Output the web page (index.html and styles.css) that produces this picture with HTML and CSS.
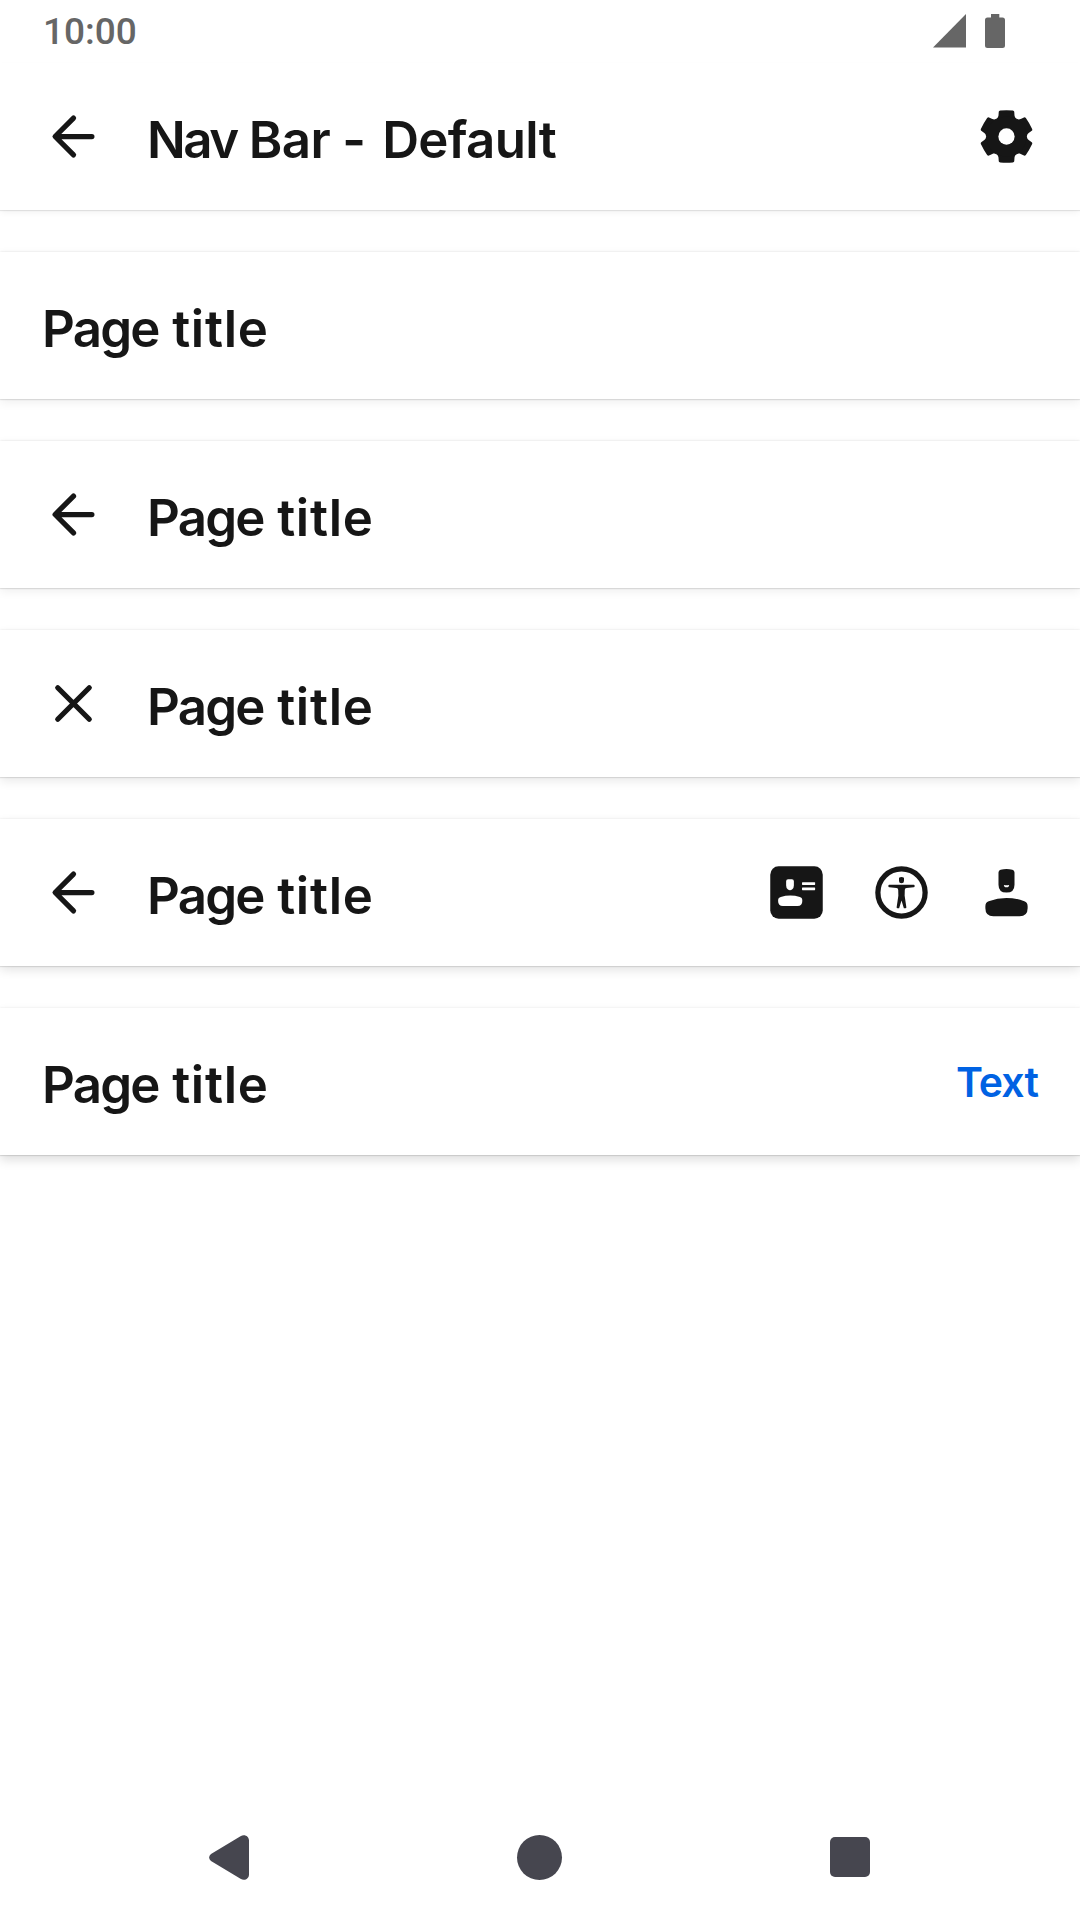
FILE: index.html
```html
<!DOCTYPE html>
<html lang="en">
<head>
<meta charset="utf-8">
<title>Nav Bar - Default</title>
<link rel="stylesheet" href="styles.css">
</head>
<body>
<svg class="defs" width="0" height="0" aria-hidden="true">
  <symbol id="back" viewBox="0 0 24 24"><path class="line" d="M19 12H5.2M12 5L5 12L12 19"/></symbol>
  <symbol id="close" viewBox="0 0 24 24"><path class="line" d="M6 6L18 18M18 6L6 18"/></symbol>
  <g id="tooth"><path d="M0 0L-3.9 -6.75C-3.4 -7.05 -3.15 -7.4 -3.05 -8L-2.95 -9.4Q-2.9 -9.8 -2.4 -9.9Q0 -10.1 2.4 -9.9Q2.9 -9.8 2.95 -9.4L3.05 -8C3.15 -7.4 3.4 -7.05 3.9 -6.75Z"/></g>
</svg>

<header class="status">
  <span class="time">10:00</span>
  <svg class="signal" viewBox="0 0 33 34"><path d="M0 33.5L33 0V33.5Z"/></svg>
  <svg class="battery" viewBox="0 0 20 34"><path d="M6 0H14.3V3.5H17.5Q20 3.5 20 6V31.5Q20 34 17.5 34H2.5Q0 34 0 31.5V6Q0 3.5 2.5 3.5H6Z"/></svg>
</header>

<main class="bars">
  <div class="bar bar-top">
    <svg class="icon"><use href="#back"/></svg>
    <h1 class="title title-main"><span class="narrow">Nav</span> Bar <span class="dash">-</span> Default</h1>
    <svg class="icon" viewBox="0 0 24 24">
      <g transform="translate(12 12)">
        <use href="#tooth"/><use href="#tooth" transform="rotate(60)"/><use href="#tooth" transform="rotate(120)"/>
        <use href="#tooth" transform="rotate(180)"/><use href="#tooth" transform="rotate(240)"/><use href="#tooth" transform="rotate(300)"/>
        <circle r="7.65"/><circle class="cut" r="3.1"/>
      </g>
    </svg>
  </div>

  <div class="bar level-1"><h2 class="title"><span class="tight">Page</span> title</h2></div>

  <div class="bar level-2">
    <svg class="icon"><use href="#back"/></svg>
    <h2 class="title"><span class="tight">Page</span> title</h2>
  </div>

  <div class="bar level-3">
    <svg class="icon"><use href="#close"/></svg>
    <h2 class="title"><span class="tight">Page</span> title</h2>
  </div>

  <div class="bar level-4">
    <svg class="icon"><use href="#back"/></svg>
    <h2 class="title"><span class="tight">Page</span> title</h2>
    <svg class="icon" viewBox="0 0 24 24">
      <rect x="2" y="2" width="20" height="20" rx="3.2"/>
      <path class="cut" d="M8.05 7.7Q8.05 6.95 8.8 6.95H10.25Q11 6.95 11 7.7V9.3Q11 10.2 10.4 10.75Q9.5 11.5 8.65 10.75Q8.05 10.2 8.05 9.3ZM5 14.8Q5 14 6 13.7Q9.6 12.6 13.3 13.7Q14.2 14 14.2 14.8V15.3Q14.2 17.1 12.4 17.1H6.8Q5 17.1 5 15.3Z"/>
      <rect class="cut" x="14.1" y="8.05" width="5" height="1.05" rx=".2"/>
      <rect class="cut" x="14.1" y="10.05" width="5" height="1.05" rx=".2"/>
    </svg>
    <svg class="icon" viewBox="0 0 24 24">
      <circle class="ring" cx="12" cy="12" r="9"/>
      <path d="M11.05 6.4Q12 5.8 12.95 6.4V7.6Q12.95 8.45 12 8.45Q11.05 8.45 11.05 7.6ZM7.35 9.05H16.65Q17 9.05 17 9.4V9.65Q17 9.95 16.65 10L13.9 10.25Q13.25 10.35 13.25 11L13.2 13.2L13.85 17.6Q13.9 18 13.5 18H12.9L12 15L11.1 18H10.5Q10.1 18 10.15 17.6L10.8 13.2L10.75 11Q10.75 10.35 10.1 10.25L7.35 10Q7 9.95 7 9.65V9.4Q7 9.05 7.35 9.05Z"/>
    </svg>
    <svg class="icon" viewBox="0 0 24 24">
      <path d="M8.95 4.4Q8.95 3.6 9.75 3.35Q12 2.75 14.25 3.35Q15.05 3.6 15.05 4.4V9Q15.05 12 12 12Q8.95 12 8.95 9ZM3.95 17.2Q3.95 15.8 5.2 15.35Q12 12.75 18.8 15.35Q20.05 15.8 20.05 17.2V18Q20.05 21.05 17 21.05H7Q3.95 21.05 3.95 18Z"/>
      <path class="cut" d="M11 9.1Q12 9.35 13 9.1Q13 10 12 10Q11 10 11 9.1Z"/>
    </svg>
  </div>

  <div class="bar level-5">
    <h2 class="title"><span class="tight">Page</span> title</h2>
    <span class="action">Text</span>
  </div>
</main>

<nav class="system">
  <svg class="sys-back" viewBox="0 0 40 45"><path d="M2 19L31.5 1.2C35.5 -1.3 40 1.2 40 5.5V39.5C40 43.8 35.5 46.3 31.5 43.8L2 26Q-1.8 22.5 2 19Z"/></svg>
  <span class="sys-home"></span>
  <span class="sys-recent"></span>
</nav>
</body>
</html>
```
FILE: styles.css
```css
* { box-sizing: border-box; }

body {
  margin: 0;
  width: 1080px;
  height: 1920px;
  display: flex;
  flex-direction: column;
  overflow: hidden;
  background: #fff;
  color: #161616;
  font-family: Inter, "Liberation Sans", sans-serif;
}

.defs { display: none; }

.status {
  height: 63px;
  flex: none;
  display: flex;
  align-items: flex-start;
  padding: 14px 75px 0 43px;
  color: #666;
  fill: #666;
}

.time {
  flex: 1;
  font: 500 37px/36px Roboto, sans-serif;
}

.signal { width: 33px; height: 34px; margin-right: 19px; }
.battery { width: 20px; height: 34px; }

.bars {
  flex: 1;
  display: flex;
  flex-direction: column;
  gap: 42px;
}

.bar {
  height: 147px;
  flex: none;
  display: flex;
  align-items: center;
  gap: 42px;
  padding: 0 42px;
  background: #fff;
  box-shadow: 0 0 2px rgba(0, 0, 0, .12), 0 1px 1px rgba(0, 0, 0, .07), 0 3px 10px rgba(0, 0, 0, .07);
}

.bar-top { box-shadow: 0 1px 1px rgba(0, 0, 0, .09), 0 3px 7px -1px rgba(0, 0, 0, .06); }
.level-3 { box-shadow: 0 0 2px rgba(0, 0, 0, .1), 0 1px 1px rgba(0, 0, 0, .08), 0 4px 10px rgba(0, 0, 0, .09); }
.level-4 { box-shadow: 0 0 2px rgba(0, 0, 0, .09), 0 1px 1px rgba(0, 0, 0, .08), 0 4px 10px rgba(0, 0, 0, .11); }
.level-5 { box-shadow: 0 0 2px rgba(0, 0, 0, .08), 0 1px 1px rgba(0, 0, 0, .09), 0 5px 10px rgba(0, 0, 0, .13); }

.title {
  flex: 1;
  margin: 0;
  padding-top: 6px;
  font-size: 51px;
  font-weight: 600;
  line-height: 63px;
  letter-spacing: .7px;
  white-space: nowrap;
}

.tight { letter-spacing: -1.8px; }

.title-main { letter-spacing: -.65px; }
.narrow { letter-spacing: -2.5px; }
.dash { letter-spacing: 4px; }

.icon { width: 63px; height: 63px; flex: none; fill: #161616; }

.line {
  fill: none;
  stroke: #161616;
  stroke-width: 2;
  stroke-linecap: round;
  stroke-linejoin: round;
}

.ring { fill: none; stroke: #161616; stroke-width: 2; }
.cut { fill: #fff; }

.action {
  padding-top: 1px;
  color: #0062e3;
  font-size: 41px;
  font-weight: 600;
  line-height: 52px;
  letter-spacing: -.9px;
}

.system {
  height: 126px;
  flex: none;
  display: flex;
  align-items: center;
  justify-content: space-between;
  padding: 0 210.5px 0 208.5px;
  fill: #46464f;
}

.sys-back { width: 40px; height: 45px; }
.sys-home { width: 45px; height: 45px; border-radius: 50%; background: #46464f; }
.sys-recent { width: 40px; height: 40px; border-radius: 5px; background: #46464f; }
```
